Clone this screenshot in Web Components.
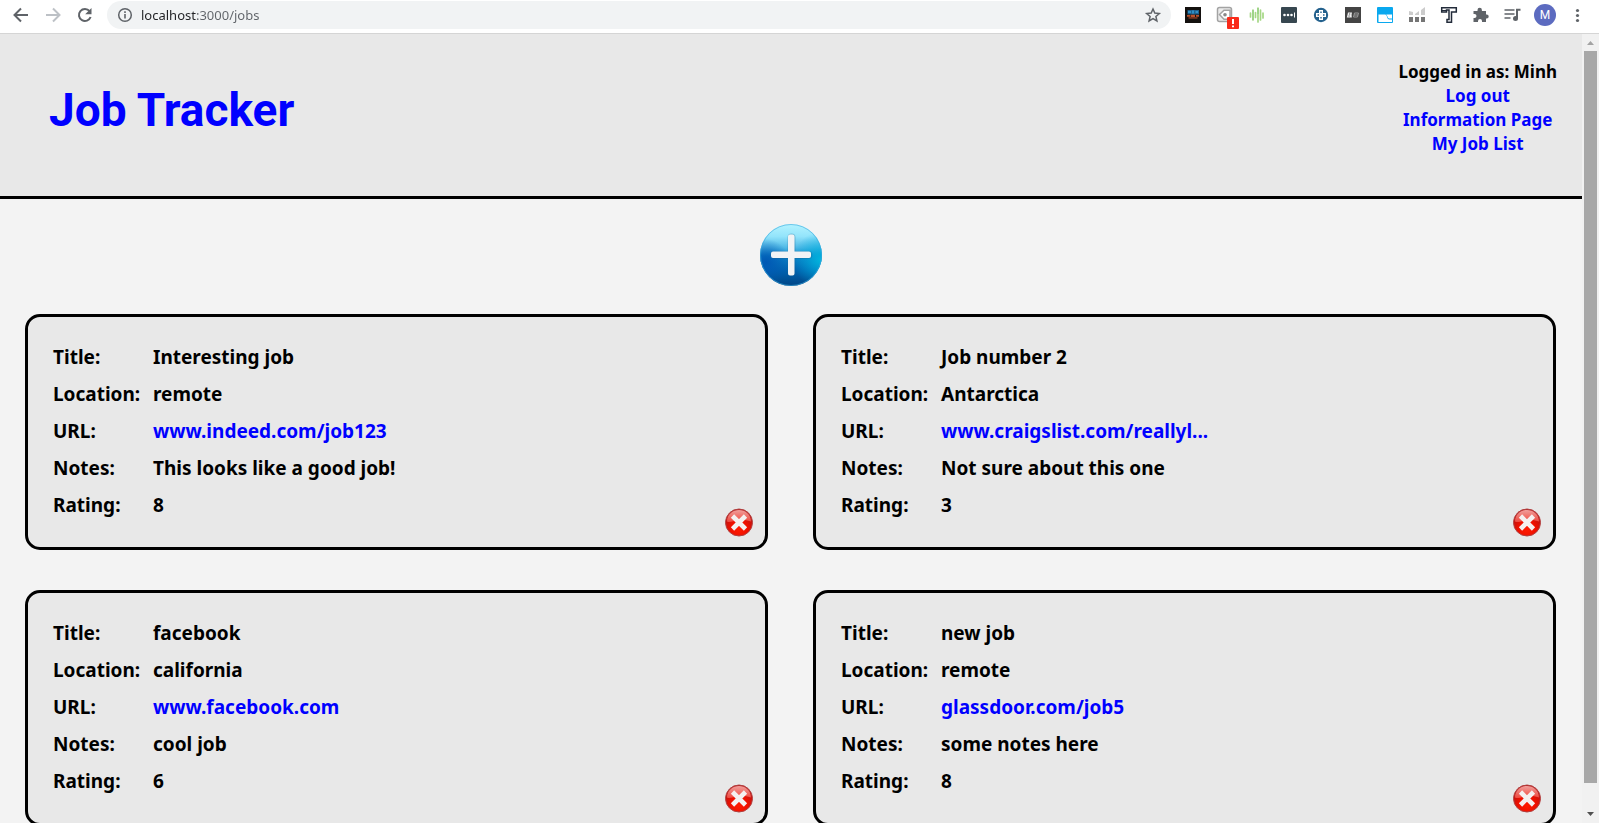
<!DOCTYPE html>
<html lang="en">
<head>
<meta charset="utf-8">
<title>Job Tracker</title>
<style>
  html, body { margin: 0; height: 100%; }
  body { font-family: "Noto Sans", "Open Sans", sans-serif; background: #f3f3f3; color: #000; overflow: hidden; }
</style>
</head>
<body>
<browser-window>
  <job-header user="Minh"></job-header>
  <job-board>
    <job-card heading="Interesting job" location="remote" url="www.indeed.com/job123" notes="This looks like a good job!" rating="8"></job-card>
    <job-card heading="Job number 2" location="Antarctica" url="www.craigslist.com/reallyl..." notes="Not sure about this one" rating="3"></job-card>
    <job-card heading="facebook" location="california" url="www.facebook.com" notes="cool job" rating="6"></job-card>
    <job-card heading="new job" location="remote" url="glassdoor.com/job5" notes="some notes here" rating="8"></job-card>
  </job-board>
</browser-window>

<script>
const attach = (el, html) => { el.attachShadow({ mode: 'open' }).innerHTML = html; };

const icons = {
  back: ['Back', '<path d="M23 15H10.500M16 8.500 9.500 15l6.500 6.500" fill="none" stroke="#5f6368" stroke-width="2"/>'],
  forward: ['Forward', '<path d="M9 15h12.500M16 8.500l6.500 6.500-6.500 6.500" fill="none" stroke="#bdc1c6" stroke-width="2"/>'],
  reload: ['Reload', '<path d="M20.600 11.200A6 6 0 1 0 21.600 17" fill="none" stroke="#5f6368" stroke-width="2"/><path d="M22.500 8v6.300h-6.300z" fill="#5f6368"/>'],
  game: ['Extension', '<rect x="8" y="7" width="16" height="16" fill="#14110f"/><path d="M10.500 10h11.500v4.500H10.500z" fill="#1d5f8c"/><path d="M11 11h3v2h-3zM15 10.500h2v3h-2zM18.500 11H21v2h-2.500z" fill="#2f8fc4"/><path d="M10 15h3.500v1.800H10zM14 14.800h4v2.200h-4zM19 15h3v1.800h-3z" fill="#b9512b"/><path d="M11.500 17h9v1.800h-9z" fill="#75341f"/>'],
  tag: ['Extension', '<rect x="8.500" y="7.500" width="14" height="14" rx="2" fill="#ececec" stroke="#a3a3a3" stroke-width="1.500"/><path d="m10.500 14.500 4.500-4.300h6v9h-6z" fill="#fff" stroke="#a3a3a3" stroke-width="1.500"/><circle cx="16" cy="14.700" r="1.800" fill="#888"/><rect x="18" y="17" width="12" height="12" rx="1" fill="#f92b1a"/><path d="M24 19v5" stroke="#fff" stroke-width="2"/><path d="M23 25.500h2v1.800h-2z" fill="#fff"/>'],
  wave: ['Extension', '<path d="M9.500 13v4M12 10v10M14.500 12.500v5M17 8v14M19.500 10v10M22 13v5" stroke="#a5d785" stroke-width="1.700" stroke-linecap="round"/><path d="M12 10v10M17 8v6" stroke="#8ccb7d" stroke-width="1"/>'],
  dots: ['Extension', '<rect x="8" y="7" width="16" height="16" rx="1" fill="#374750"/><g fill="#fff"><circle cx="11.500" cy="15" r="1.300"/><circle cx="15" cy="15" r="1.300"/><circle cx="18.500" cy="15" r="1.300"/><path d="M21 12.500h1v5h-1z"/></g>'],
  cross: ['Extension', '<circle cx="16" cy="15" r="7.200" fill="#24618d"/><path d="M14 10h4v3h3v4h-3v3h-4v-3h-3v-4h3z" fill="#fff"/><path d="M15.300 11.500h1.400v1.500h-1.400zM15.300 17h1.400v1.500h-1.400zM12.500 14.300h1.500v1.400h-1.500zM18 14.300h1.500v1.400H18z" fill="#24618d"/>'],
  bb: ['Extension', '<rect x="8" y="7" width="16" height="16" fill="#444"/><path d="M11 12.500h4l-.4 2.200.2 2.800H9.800z" fill="#eee"/><path d="M12 14h1.200M11.500 16h1.200" stroke="#555"/><path d="M17.500 13h4l-1 4h-4z" fill="none" stroke="#999"/><path d="M17 15h4" stroke="#999"/>'],
  blue: ['Extension', '<rect x="8" y="7" width="16" height="16" rx="1" fill="#09a8ef"/><path d="M9.500 14.500H16c2.500 0 1.500 5 4.500 5H23V22H9.500z" fill="#fff"/><path d="M17 14.500h6v4h-2.500c-2 0-1.500-2.500-3.500-4z" fill="#fff"/>'],
  bars: ['Extension', '<path d="M8 11l4 1v3H8zM14 14l4-3v4h-4zM20 10l4-3v8h-4z" fill="#ccc"/><path d="M8 17h4v5H8zM14 17h4v5h-4zM20 17h4v5h-4z" fill="#757575"/>'],
  type: ['Extension', '<path d="M8.700 12V7.800H23.300V12H18.500V22.200H14V19.500h2V10h-2.500V12z" fill="#fff" stroke="#222b3a" stroke-width="1.500"/><path d="M9 10.500h5" stroke="#222b3a"/>'],
  puzzle: ['Extensions', '<path d="M8.500 11h4v-1a2.200 2.200 0 0 1 4.400 0v1h4.100v3.500h.7a2 2 0 0 1 0 4H21V22h-4v-1a2 2 0 0 0-4 0v1H8.500v-4h1a2 2 0 0 0 0-4h-1z" fill="#5f6368"/>'],
  queue: ['Media', '<path d="M7.500 10h10M7.500 14h10M7.500 18h6" stroke="#5f6368" stroke-width="1.700"/><path d="M20 18.500V9.700h3.500" fill="none" stroke="#5f6368" stroke-width="2"/><circle cx="18.500" cy="18.500" r="2.500" fill="#5f6368"/>'],
  menu: ['Menu', '<g fill="#5f6368"><circle cx="16.500" cy="10.500" r="1.600"/><circle cx="16.500" cy="15.500" r="1.600"/><circle cx="16.500" cy="20.500" r="1.600"/></g>'],
  star: ['Bookmark', '<path d="m16 9 1.800 4.100 4.500.4-3.400 3 1 4.400-3.900-2.300-3.900 2.300 1-4.400-3.400-3 4.500-.4z" fill="none" stroke="#5f6368" stroke-width="1.500"/>'],
  info: ['Site information', '<circle cx="16" cy="15" r="6.300" fill="none" stroke="#5f6368" stroke-width="1.500"/><path d="M15.200 14h1.600v4.500h-1.600zM15.200 11.300h1.600v1.600h-1.600z" fill="#5f6368"/>']
};

customElements.define('tool-button', class extends HTMLElement {
  connectedCallback() {
    const [label, art] = icons[this.getAttribute('icon')];
    attach(this, `<style>
      :host { display: block; flex: none; }
      button { display: block; border: 0; padding: 0; background: none; }
      svg { display: block; width: 32px; height: 30px; }
    </style><button type="button" aria-label="${label}"><svg viewBox="0 0 32 30">${art}</svg></button>`);
  }
});

customElements.define('browser-toolbar', class extends HTMLElement {
  connectedCallback() {
    const tools = names => names.split(' ').map(n => `<tool-button icon="${n}"></tool-button>`).join('');
    attach(this, `<style>
      :host { display: flex; align-items: center; padding: 0 6px 3px 5px; background: #fff; border-bottom: 1px solid #d5d5d5; }
      form { flex: 1; display: flex; align-items: center; min-width: 0; height: 28px; margin: 0 6px; padding: 0 2px; border-radius: 14px; background: #f1f3f4; }
      input { flex: 1; min-width: 0; border: 0; outline: 0; padding: 0; font: 13px/20px "Noto Sans", sans-serif;
        color: transparent; background: linear-gradient(to right, #202124 56px, #5f6368 56px); -webkit-background-clip: text; background-clip: text; }
      .avatar { width: 22px; height: 22px; margin: 0 5px; padding: 0; border: 0; border-radius: 50%; background: #5c6bc0; color: #fff; font: 12px/22px Roboto, sans-serif; }
    </style>
    ${tools('back forward reload')}
    <form><tool-button icon="info"></tool-button><input aria-label="Address" value="localhost:3000/jobs"><tool-button icon="star"></tool-button></form>
    ${tools('game tag wave dots cross bb blue bars type puzzle queue')}
    <button class="avatar" type="button">M</button>
    ${tools('menu')}`);
  }
});

customElements.define('page-scrollbar', class extends HTMLElement {
  connectedCallback() {
    attach(this, `<style>
      :host { display: flex; flex-direction: column; flex: none; width: 17px; background: #f1f1f1; }
      svg { display: block; flex: none; width: 17px; height: 17px; }
      .track { flex: 1; padding: 0 2px; }
      .thumb { height: 97%; background: #a8a8a8; }
    </style>
    <svg viewBox="0 0 17 17"><path d="M5 11h7L8.500 7z" fill="#a3a3a3"/></svg>
    <div class="track"><div class="thumb"></div></div>
    <svg viewBox="0 0 17 17"><path d="M5 6h7l-3.500 4z" fill="#505050"/></svg>`);
  }
});

customElements.define('browser-window', class extends HTMLElement {
  connectedCallback() {
    attach(this, `<style>
      :host { display: flex; flex-direction: column; height: 100vh; }
      .view { flex: 1; display: flex; min-height: 0; }
      .page { flex: 1; min-width: 0; overflow: hidden; }
    </style>
    <browser-toolbar></browser-toolbar>
    <div class="view"><div class="page"><slot></slot></div><page-scrollbar></page-scrollbar></div>`);
  }
});

customElements.define('job-header', class extends HTMLElement {
  connectedCallback() {
    attach(this, `<style>
      :host { display: flex; justify-content: space-between; align-items: flex-start; padding: 26px 25px 40px 49px; background: #e8e8e8; border-bottom: 3px solid #000; }
      a { color: #00f; text-decoration: none; }
      h1 { margin: 22px 0 0; font: 700 46px/56px Roboto, sans-serif; }
      nav { display: flex; flex-direction: column; align-items: center; font-size: 17px; line-height: 24px; font-weight: 700; }
    </style>
    <h1><a href="#home">Job Tracker</a></h1>
    <nav><span>Logged in as: ${this.getAttribute('user')}</span><a href="#logout">Log out</a><a href="#info">Information Page</a><a href="#jobs">My Job List</a></nav>`);
  }
});

customElements.define('job-board', class extends HTMLElement {
  connectedCallback() {
    attach(this, `<style>
      :host { display: block; padding: 24px 26px 40px 25px; }
      button { display: block; margin: 0 auto 27px; padding: 0; border: 0; background: none; border-radius: 50%; }
      svg { display: block; width: 64px; height: 64px; }
      .grid { display: grid; grid-template-columns: 1fr 1fr; gap: 40px 45px; }
    </style>
    <button type="button" aria-label="Add job"><svg viewBox="0 0 64 64">
      <defs>
        <linearGradient id="base" x1="0" y1="0" x2="0" y2="1"><stop offset="0" stop-color="#b4f3ff"/><stop offset=".2" stop-color="#93e4fb"/><stop offset=".38" stop-color="#4fb9e6"/><stop offset=".52" stop-color="#0c84c8"/><stop offset=".75" stop-color="#0062ae"/><stop offset="1" stop-color="#004585"/></linearGradient>
        <radialGradient id="cyan" cx=".98" cy=".58" r=".45"><stop offset="0" stop-color="#00b4de"/><stop offset="1" stop-color="#00a8dc" stop-opacity="0"/></radialGradient>
        <radialGradient id="deep" cx=".1" cy=".62" r=".38"><stop offset="0" stop-color="#0058b4"/><stop offset="1" stop-color="#0058b4" stop-opacity="0"/></radialGradient>
      </defs>
      <circle cx="32" cy="32" r="31" fill="url(#base)"/><circle cx="32" cy="32" r="31" fill="url(#cyan)"/><circle cx="32" cy="32" r="31" fill="url(#deep)"/>
      <circle cx="32" cy="32" r="30.500" fill="none" stroke="#3ba8dc" stroke-opacity=".6"/>
      <path d="M32.500 14.500v35M15 32h34.500" stroke="#1b5f90" stroke-opacity=".3" stroke-width="8" stroke-linecap="round"/>
      <path d="M29 13.500q0-2 2-2h2.500q2 0 2 2V28.500H50q2 0 2 2v2.500q0 2-2 2H35.500V50.500q0 2-2 2H31q-2 0-2-2V35H14q-2 0-2-2v-2.500q0-2 2-2h15z" fill="#f1f3f5"/>
    </svg></button>
    <div class="grid"><slot></slot></div>`);
  }
});

customElements.define('job-card', class extends HTMLElement {
  connectedCallback() {
    const v = n => this.getAttribute(n);
    attach(this, `<style>
      :host { display: flex; justify-content: space-between; align-items: flex-end; min-width: 0; padding: 0 12px 10px 25px; border: 3px solid #000; border-radius: 15px; background: #e8e8e8; }
      dl { display: grid; grid-template-columns: 100px auto; margin: 0; padding: 22px 0 13px; font-size: 19px; line-height: 37px; font-weight: 700; }
      dd { margin: 0; white-space: nowrap; }
      a { color: #00f; text-decoration: none; }
      button { display: block; padding: 0; border: 0; background: none; }
      svg { display: block; width: 28px; height: 29px; }
    </style>
    <dl>
      <dt>Title:</dt><dd>${v('heading')}</dd>
      <dt>Location:</dt><dd>${v('location')}</dd>
      <dt>URL:</dt><dd><a href="#job">${v('url')}</a></dd>
      <dt>Notes:</dt><dd>${v('notes')}</dd>
      <dt>Rating:</dt><dd>${v('rating')}</dd>
    </dl>
    <button type="button" aria-label="Delete job"><svg viewBox="0 0 28 29">
      <defs>
        <radialGradient id="red" cx=".5" cy=".75" r=".65"><stop offset="0" stop-color="#ff1a00"/><stop offset=".5" stop-color="#ee1000"/><stop offset="1" stop-color="#b81414"/></radialGradient>
        <linearGradient id="gloss" x1="0" y1="0" x2="0" y2="1"><stop offset="0" stop-color="#ffc0bc"/><stop offset="1" stop-color="#f4564c"/></linearGradient>
      </defs>
      <circle cx="14" cy="14.500" r="13.500" fill="url(#red)" stroke="#b04040"/>
      <path d="M2 13.500C2 6.500 7.500 2 14 2s12 4.500 12 11.500c-3-.5-6-2.500-12-1.500S5 15 2 13.500z" fill="url(#gloss)" opacity=".8"/>
      <path d="m7.500 8 13 13M20.500 8l-13 13" stroke="#f4f0f0" stroke-width="4.600"/>
    </svg></button>`);
  }
});
</script>
</body>
</html>
